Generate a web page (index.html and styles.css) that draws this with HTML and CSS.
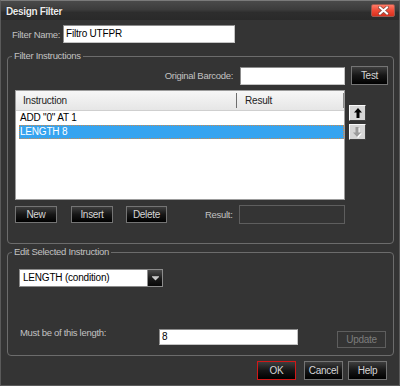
FILE: index.html
```html
<!DOCTYPE html>
<html>
<head>
<meta charset="utf-8">
<link rel="stylesheet" href="styles.css">
</head>
<body>
<div class="window">
  <div class="titlebar">
    <span class="title">Design Filter</span>
    <div class="close">
      <svg width="11" height="9" viewBox="0 0 11 9">
        <path d="M2 1.5 L9 7.5 M9 1.5 L2 7.5" stroke="#8a4a40" stroke-width="3.6" stroke-linecap="square"/>
        <path d="M2 1.5 L9 7.5 M9 1.5 L2 7.5" stroke="#ffffff" stroke-width="2" stroke-linecap="square"/>
      </svg>
    </div>
  </div>

  <div class="name-row">
    <span class="name-label">Filter Name:</span>
    <div class="field name-field">Filtro UTFPR</div>
  </div>

  <fieldset class="group group-instr">
    <legend>Filter Instructions</legend>
    <div class="barcode-row">
      <span>Original Barcode:</span>
      <div class="field barcode-field"></div>
      <div class="btn test-btn">Test</div>
    </div>
    <div class="list-row">
      <div class="listview">
        <div class="lv-head">
          <div class="lv-col1">Instruction</div>
          <div class="lv-col2">Result</div>
        </div>
        <div class="lv-row">ADD "0" AT 1</div>
        <div class="lv-row selected">LENGTH 8</div>
      </div>
      <div class="arrows">
        <div class="arrow">
          <svg width="8" height="10" viewBox="0 0 8 10"><polygon points="4,0 8,4.5 5.5,4.5 5.5,10 2.5,10 2.5,4.5 0,4.5" fill="#000"/></svg>
        </div>
        <div class="arrow">
          <svg width="9" height="11" viewBox="0 0 9 11"><polygon points="4,10 8,5.5 5.5,5.5 5.5,0 2.5,0 2.5,5.5 0,5.5" fill="#ffffff" transform="translate(1,1)"/><polygon points="4,10 8,5.5 5.5,5.5 5.5,0 2.5,0 2.5,5.5 0,5.5" fill="#9c9c9c"/></svg>
        </div>
      </div>
    </div>
    <div class="action-row">
      <div class="btn btn-new">New</div>
      <div class="btn btn-insert">Insert</div>
      <div class="btn btn-delete">Delete</div>
      <span class="result-label">Result:</span>
      <div class="field disabled result-field"></div>
    </div>
  </fieldset>

  <fieldset class="group group-edit">
    <legend>Edit Selected Instruction</legend>
    <div class="select">
      <div class="select-text">LENGTH (condition)</div>
      <div class="select-btn">
        <svg width="7" height="5" viewBox="0 0 7 5"><polygon points="0,1 7,1 3.5,4.5" fill="#c8c8c8"/><rect x="0" y="0" width="7" height="0.8" fill="#c8c8c8"/></svg>
      </div>
    </div>
    <div class="must-row">
      <span class="must-label">Must be of this length:</span>
      <div class="field must-field">8</div>
      <div class="btn disabled update-btn">Update</div>
    </div>
  </fieldset>

  <div class="footer">
    <div class="btn ok-btn">OK</div>
    <div class="btn cancel-btn">Cancel</div>
    <div class="btn help-btn">Help</div>
  </div>
</div>
</body>
</html>
```

FILE: styles.css
```css
* { box-sizing: border-box; }
html, body { margin: 0; padding: 0; }
body {
  width: 400px;
  height: 386px;
  overflow: hidden;
  background: #343434;
  font-family: "Liberation Sans", Arial, sans-serif;
  font-size: 9.5px;
  letter-spacing: -0.3px;
  color: #c2c2c2;
}
.window {
  width: 400px;
  height: 386px;
  border: 1px solid #5a5a5a;
  border-top-color: #7a7a7a;
  background: #343434;
  display: flex;
  flex-direction: column;
}
.titlebar {
  flex: none;
  height: 19px;
  display: flex;
  align-items: flex-start;
  justify-content: space-between;
  padding: 0 4px 0 5px;
  background: linear-gradient(#4a4a4a, #3c3c3c 45%, #2d2d2d 60%, #2a2a2a);
}
.title {
  margin-top: 5px;
  font-size: 10px;
  line-height: 12px;
  font-weight: bold;
  letter-spacing: -0.35px;
  color: #ececec;
  text-shadow: 0 0 1px #000;
}
.close {
  margin-top: 3px;
  width: 24px;
  height: 13px;
  border: 1px solid #9a5a50;
  border-radius: 2px;
  background: linear-gradient(#ff7a66, #f04a36 50%, #d8301e);
  display: flex;
  align-items: center;
  justify-content: center;
}
.close svg { display: block; }

.name-row {
  display: flex;
  align-items: center;
  margin: 5px 0 0 11px;
  height: 18px;
}
.name-label { width: 51px; }
.field {
  background: #fff;
  border: 1px solid;
  border-color: #8c8c8c #c4c4c4 #c4c4c4 #8c8c8c;
  color: #000;
  padding: 0 2px;
  line-height: 16px;
  font-size: 10px;
  letter-spacing: -0.2px;
}
.name-field { width: 172px; height: 18px; }

.group {
  margin: 7px 0 0 6px;
  width: 387px;
  border: 1px solid #6c6c6c;
  border-radius: 4px;
  padding: 4px 5px 0 7px;
  min-width: 0;
}
.group legend {
  margin-left: -3px;
  padding: 0 2px;
  line-height: 12px;
  color: #c2c2c2;
}
.group-instr { height: 194px; }
.group-edit { height: 110px; margin-top: 2px; padding-top: 11px; }

.barcode-row {
  display: flex;
  justify-content: flex-end;
  align-items: center;
  height: 19px;
}
.barcode-field { width: 105px; height: 18px; margin-left: 7px; }
.btn {
  display: flex;
  align-items: center;
  justify-content: center;
  background: linear-gradient(#3e3e3e, #161616 50%, #000);
  border: 1px solid #747474;
  color: #d6d6d6;
  font-size: 10px;
}
.test-btn { width: 37px; height: 19px; margin-left: 6px; }

.list-row {
  display: flex;
  margin-top: 5px;
}
.listview {
  width: 330px;
  height: 110px;
  background: #fff;
  border: 1px solid #9c9c9c;
  color: #000;
  font-size: 10px;
  letter-spacing: -0.2px;
}
.lv-head {
  display: flex;
  height: 20px;
  background: linear-gradient(#f7f7f7, #e6e6e6);
  border-bottom: 1px solid #cfcfcf;
  color: #222;
}
.lv-col1 {
  width: 221px;
  padding-left: 7px;
  border-right: 1px solid #6e6e6e;
  margin: 2px 0;
  line-height: 15px;
}
.lv-col2 {
  flex: 1;
  padding-left: 8px;
  border-right: 1px solid #8a8a8a;
  margin: 2px 0;
  line-height: 15px;
}
.lv-row {
  height: 14px;
  line-height: 14px;
  margin-left: 3px;
  padding-left: 1px;
}
.lv-row.selected {
  background: #36a4f0;
  color: #fff;
  border: 1px dotted #c88a50;
  padding-left: 0;
  line-height: 12px;
}
.arrows {
  display: flex;
  flex-direction: column;
  gap: 3px;
  margin-left: 4px;
  padding-top: 15px;
}
.arrow {
  width: 17px;
  height: 16px;
  background: #d6d6d6;
  border: 1px solid;
  border-color: #fafafa #404040 #404040 #fafafa;
  display: flex;
  align-items: center;
  justify-content: center;
}
.arrow svg { display: block; }

.action-row {
  display: flex;
  align-items: center;
  margin-top: 5px;
  height: 19px;
}
.btn-new { width: 42px; height: 17px; }
.btn-insert { width: 42px; height: 17px; margin-left: 14px; }
.btn-delete { width: 41px; height: 17px; margin-left: 13px; }
.result-label { width: 34px; margin-left: 38px; }
.field.disabled {
  background: #343434;
  border: 1px solid #5e5e5e;
}
.result-field { width: 106px; height: 19px; }

.select {
  margin-left: 4px;
  width: 144px;
  height: 18px;
  display: flex;
  border: 1px solid #8c8c8c;
  background: #fff;
}
.select-text {
  flex: 1;
  padding-left: 3px;
  line-height: 16px;
  color: #000;
  font-size: 10px;
  letter-spacing: -0.2px;
}
.select-btn {
  width: 15px;
  background: linear-gradient(#4c4c4c, #1a1a1a 55%, #080808);
  border-left: 1px solid #909090;
  display: flex;
  align-items: center;
  justify-content: center;
}
.select-btn svg { display: block; }

.must-row {
  display: flex;
  align-items: flex-start;
  margin-top: 42px;
  height: 19px;
}
.must-label { width: 139px; margin-left: 5px; line-height: 12px; margin-top: -2px; }
.must-field { width: 139px; height: 16px; line-height: 14px; }
.update-btn {
  width: 49px;
  height: 17px;
  margin-left: 39px;
  margin-top: 2px;
}
.btn.disabled {
  background: #343434;
  border-color: #5e5e5e;
  color: #7c7c7c;
}

.footer {
  display: flex;
  justify-content: flex-end;
  margin-top: 5px;
  padding-right: 12px;
}
.footer .btn { width: 39px; height: 19px; }
.ok-btn { border-color: #d21818; }
.cancel-btn { margin-left: 8px; }
.help-btn { margin-left: 5px; }
```
